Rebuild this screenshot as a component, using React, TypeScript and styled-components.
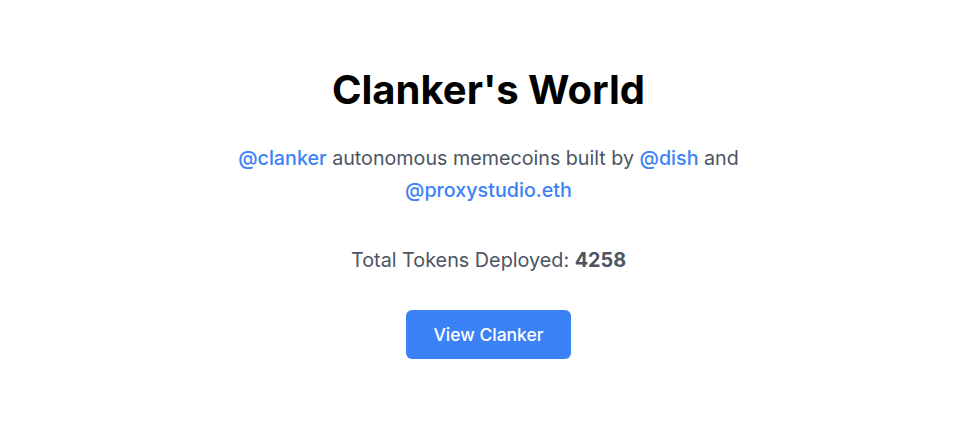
import styled, { createGlobalStyle } from "styled-components";

const GlobalStyle = createGlobalStyle`
    html, body {
        margin: 0;
        padding: 0;
        background: #ffffff;
        font-family: Inter, "Liberation Sans", sans-serif;
    }
`;

const Page = styled.main`
    display: flex;
    flex-direction: column;
    align-items: center;
    padding: 66px 0 0 16px;
    text-align: center;
`;

const Title = styled.h1`
    margin: 0 0 28px;
    font-size: 40px;
    line-height: 48px;
    font-weight: 700;
    color: #000000;
`;

const Tagline = styled.p`
    margin: 0;
    max-width: 540px;
    font-size: 19.7px;
    line-height: 32px;
    color: #4b5563;
`;

const Handle = styled.a`
    color: #3b82f6;
    font-weight: 500;
    text-decoration: none;
`;

const Stat = styled.p`
    margin: 38px 0 0;
    font-size: 19.8px;
    line-height: 32px;
    color: #4b5563;

    strong {
        font-weight: 700;
    }
`;

const Button = styled.button`
    margin-top: 34px;
    padding: 0;
    width: 165px;
    height: 49px;
    border: none;
    border-radius: 6px;
    background: #3b82f6;
    color: #ffffff;
    font-family: inherit;
    font-size: 17.5px;
    font-weight: 500;
    cursor: pointer;
`;

const App = () => {
    return (
        <>
            <GlobalStyle />
            <Page>
                <Title>Clanker's World</Title>
                <Tagline>
                    <Handle href="#">@clanker</Handle> autonomous memecoins built by{" "}
                    <Handle href="#">@dish</Handle> and <Handle href="#">@proxystudio.eth</Handle>
                </Tagline>
                <Stat>
                    Total Tokens Deployed: <strong>4258</strong>
                </Stat>
                <Button>View Clanker</Button>
            </Page>
        </>
    );
};

export default App;
